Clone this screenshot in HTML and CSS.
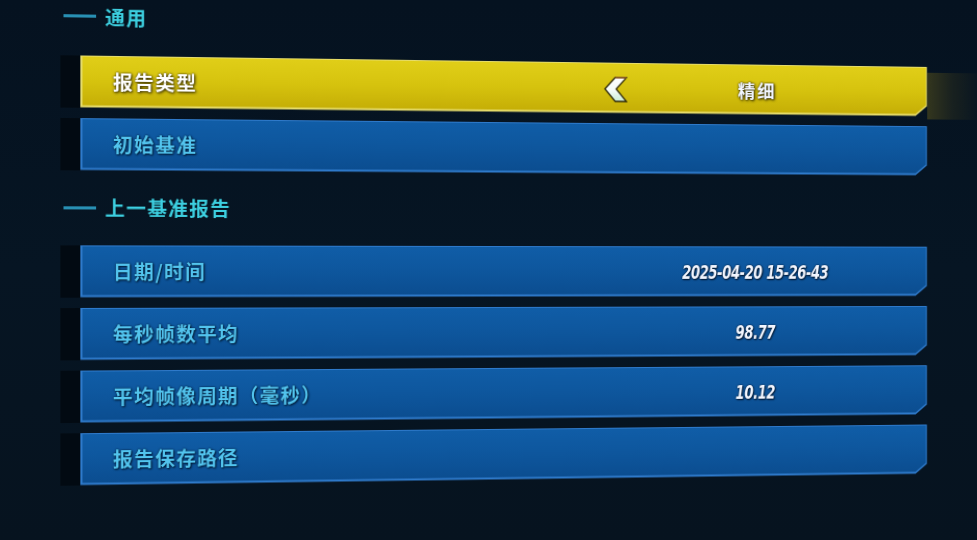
FILE: index.html
```html
<!DOCTYPE html>
<html lang="zh-CN">
<head>
<meta charset="utf-8">
<title>报告设置</title>
<link rel="stylesheet" href="styles.css">
</head>
<body>
<div class="panel">
  <section class="group">
    <div class="group-head"><span class="dash"></span><span class="group-title">通用</span></div>
    <div class="list">
      <div class="row">
        <div class="strip"></div>
        <div class="card card-sel">
          <div class="face">
            <span class="label">报告类型</span>
            <svg class="chev" viewBox="0 0 24 26" width="24" height="26" aria-hidden="true">
              <defs>
                <linearGradient id="cg" x1="0" y1="0" x2="0" y2="1">
                  <stop offset="0" stop-color="#ffffff"/>
                  <stop offset="0.55" stop-color="#f4fbf8"/>
                  <stop offset="1" stop-color="#c8ecd4"/>
                </linearGradient>
              </defs>
              <polygon points="1,12.5 11.5,1 23,1 12.5,12.5 23,25 11.5,25" fill="url(#cg)" stroke="#2b2608" stroke-width="1.3" stroke-linejoin="miter"/>
              <polyline points="11.5,1 23,1" fill="none" stroke="#b06a2a" stroke-width="1.2"/>
            </svg>
            <span class="value value-cjk">精细</span>
          </div>
        </div>
        <div class="glow"></div>
      </div>
      <div class="row">
        <div class="strip"></div>
        <div class="card">
          <div class="face">
            <span class="label">初始基准</span>
          </div>
        </div>
      </div>
    </div>
  </section>

  <section class="group group-2">
    <div class="group-head"><span class="dash"></span><span class="group-title">上一基准报告</span></div>
    <div class="list">
      <div class="row">
        <div class="strip"></div>
        <div class="card">
          <div class="face">
            <span class="label">日期/时间</span>
            <span class="value">2025-04-20 15-26-43</span>
          </div>
        </div>
      </div>
      <div class="row">
        <div class="strip"></div>
        <div class="card">
          <div class="face">
            <span class="label">每秒帧数平均</span>
            <span class="value">98.77</span>
          </div>
        </div>
      </div>
      <div class="row">
        <div class="strip"></div>
        <div class="card">
          <div class="face">
            <span class="label">平均帧像周期（毫秒）</span>
            <span class="value">10.12</span>
          </div>
        </div>
      </div>
      <div class="row">
        <div class="strip"></div>
        <div class="card">
          <div class="face">
            <span class="label">报告保存路径</span>
          </div>
        </div>
      </div>
    </div>
  </section>
</div>
</body>
</html>
```

FILE: styles.css
```css
html, body {
  margin: 0;
  padding: 0;
}

body {
  width: 977px;
  height: 540px;
  overflow: hidden;
  background: linear-gradient(180deg, #051220 0%, #061523 50%, #06131f 100%);
  font-family: "Noto Sans CJK SC", "Noto Sans", sans-serif;
}

.panel {
  width: 977px;
  height: 540px;
  box-sizing: border-box;
  padding: 10.5px 36px 0 70.6px;
  transform-origin: 488.5px 270px;
  transform: perspective(1000px) rotateY(3.7deg);
}

.group-head {
  display: flex;
  align-items: center;
  height: 24px;
  margin-bottom: 26px;
}

.group-2 {
  margin-top: 24.8px;
}

.group-2 .group-head {
  margin-bottom: 24.3px;
}

.dash {
  width: 31px;
  height: 3px;
  margin-left: 3.4px;
  margin-right: 8.5px;
  background: #2890b4;
}

.group-title {
  color: #3ccfe0;
  font-size: 19px;
  font-weight: 700;
  letter-spacing: 1.2px;
  line-height: 24px;
  text-shadow: 0 0 2px rgba(0, 10, 20, 0.9);
}

.list {
  display: flex;
  flex-direction: column;
  gap: 10px;
}

.row {
  display: flex;
  height: 51px;
}

.strip {
  flex: none;
  width: 19px;
  background: #020a12;
}

.card {
  flex: none;
  width: 851px;
  box-sizing: border-box;
  padding: 1.5px 1px 2px 2px;
  background: #2e7acb;
  clip-path: polygon(0 0, 100% 0, 100% calc(100% - 10px), calc(100% - 12px) 100%, 0 100%);
}

.face {
  height: 100%;
  box-sizing: border-box;
  padding-left: 29.5px;
  display: grid;
  grid-template-columns: 483.5px 24px 32px 200px;
  align-items: center;
  background: linear-gradient(180deg, #105da7 0%, #0e579e 45%, #0b4d90 100%);
  clip-path: polygon(0 0, 100% 0, 100% calc(100% - 9px), calc(100% - 11px) 100%, 0 100%);
}

.card-sel {
  background: #e6dc6a;
}

.card-sel .face {
  background: linear-gradient(180deg, #e0ce18 0%, #d6c30e 50%, #c5ae06 100%);
}

.label {
  grid-column: 1;
  color: #52c4ee;
  font-size: 19px;
  font-weight: 700;
  letter-spacing: 1.2px;
  white-space: nowrap;
  text-shadow: 0 0 2px #021a33, 1px 1px 2px #021a33;
}

.card-sel .label {
  color: #ffffff;
  text-shadow: 0 0 2px #3a3000, 1px 1px 3px #2a2200;
}

.chev {
  grid-column: 2;
  display: block;
  margin-top: 4px;
}

.value {
  grid-column: 4;
  justify-self: center;
  display: inline-block;
  transform: scaleX(0.8);
  color: #f2f6ff;
  font-family: "Liberation Sans Narrow", "DejaVu Sans Condensed", "Liberation Sans", sans-serif;
  font-stretch: condensed;
  font-style: italic;
  font-weight: 700;
  font-size: 19px;
  letter-spacing: -0.6px;
  white-space: nowrap;
  margin-top: 3px;
  text-shadow: 0 0 2px #021428, 1px 1px 2px #021428;
}

.value-cjk {
  transform: none;
  font-family: "Noto Sans CJK SC", sans-serif;
  font-style: normal;
  font-size: 18px;
  letter-spacing: 2px;
  margin-top: 3px;
  margin-left: 4px;
  text-shadow: 0 0 2px #2e2600, 1px 1px 3px #221c00;
}

.glow {
  flex: none;
  width: 60px;
  margin-top: 6px;
  height: 48px;
  background: linear-gradient(90deg, rgba(70, 68, 28, 0.7) 0%, rgba(46, 48, 28, 0.45) 45%, rgba(10, 24, 32, 0) 100%);
}
```
